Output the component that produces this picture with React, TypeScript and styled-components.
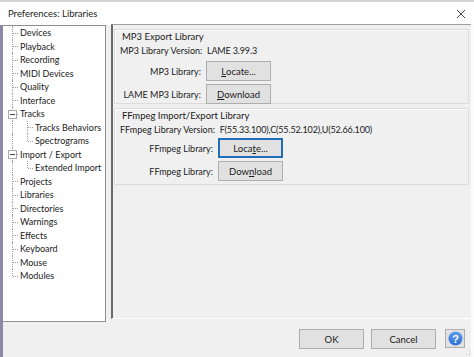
import React from 'react'
import styled, { createGlobalStyle, css } from 'styled-components'

const GlobalStyle = createGlobalStyle`
  html, body {
    margin: 0;
    padding: 0;
    background: #ffffff;
  }
  body {
    font-family: Lato, 'Noto Sans', sans-serif;
    font-size: 9px;
    color: #1b1b1b;
  }
`

const Window = styled.div`
  width: 474px;
  height: 357px;
  box-sizing: border-box;
  display: flex;
  flex-direction: column;
  border-top: 2px solid #d3d3d6;
  overflow: hidden;
`

const TitleBar = styled.div`
  height: 23px;
  display: flex;
  align-items: center;
  justify-content: space-between;
  padding: 0 8px 0 8px;
  background: #ffffff;
  font-size: 9.5px;
  color: #222;
`

const Body = styled.div`
  flex: 1;
  display: flex;
  flex-direction: column;
  background: #f0f0f0;
  border-left: 3px solid #8c88a8;
  border-right: 3px solid #fbfbfb;
`

const Main = styled.div`
  display: flex;
  gap: 5px;
  height: 297px;
`

const Tree = styled.div`
  width: 103px;
  height: 297px;
  box-sizing: border-box;
  background: #ffffff;
  border: 1px solid #8e8f94;
  border-left: 0;
`

const Row = styled.div`
  height: 13.5px;
  display: flex;
  align-items: stretch;
`

const Cell = styled.div<{ $kind: 'vert' | 'tee' | 'end' | 'blank' }>`
  position: relative;
  width: 15px;
  flex: none;

  ${(p) =>
    p.$kind !== 'blank' &&
    css`
      &::before {
        content: '';
        position: absolute;
        left: 9px;
        top: 0;
        height: ${p.$kind === 'end' ? '50%' : '100%'};
        border-left: 1px dotted #a0a0a0;
      }
    `}

  ${(p) =>
    (p.$kind === 'tee' || p.$kind === 'end') &&
    css`
      &::after {
        content: '';
        position: absolute;
        left: 10px;
        right: 0;
        top: 50%;
        border-top: 1px dotted #a0a0a0;
      }
    `}
`

const Expander = styled.span`
  position: absolute;
  left: 5px;
  top: 2.5px;
  width: 7px;
  height: 7px;
  border: 1px solid #a8a8a8;
  background: #fff;
  z-index: 1;

  &::after {
    content: '';
    position: absolute;
    left: 1px;
    right: 1px;
    top: 3px;
    border-top: 1px solid #404040;
  }
`

const Label = styled.span`
  padding-left: 2px;
  line-height: 13.5px;
  white-space: nowrap;
  font-size: 9px;
`

const Panel = styled.div`
  flex: 1;
  margin-top: -1px;
  border-top: 1px solid #a0a0a0;
  border-left: 2px solid #6a6a6a;
  border-bottom: 1px solid #ffffff;
  height: 295px;
  box-sizing: border-box;
  padding: 4px 2px 0 1px;
  display: flex;
  flex-direction: column;
  gap: 4px;
`

const Group = styled.div<{ $height: number }>`
  height: ${(p) => p.$height}px;
  box-sizing: border-box;
  border: 1px solid #dcdcdc;
  box-shadow: inset 1px 1px 0 #ffffff;
  padding: 0 5px;
  display: flex;
  flex-direction: column;
`

const GroupTitle = styled.div`
  line-height: 12px;
  margin-top: 1px;
  padding-left: 2px;
  font-size: 9.5px;
`

const Version = styled.div`
  line-height: 13px;
  margin-top: 1px;
  white-space: nowrap;
`

const VersionValue = styled.span`
  letter-spacing: -0.15px;
`

const Fields = styled.div<{ $labelWidth: number; $top: number }>`
  display: grid;
  grid-template-columns: ${(p) => p.$labelWidth}px 65px;
  column-gap: 5px;
  row-gap: 3px;
  align-items: center;
  margin-top: ${(p) => p.$top}px;
`

const FieldLabel = styled.span`
  text-align: right;
  white-space: nowrap;
`

const Button = styled.button<{ $focused?: boolean; $width?: number }>`
  width: ${(p) => p.$width ?? 65}px;
  height: 20px;
  box-sizing: border-box;
  padding: 0;
  font-family: inherit;
  font-size: 9.5px;
  color: #1b1b1b;
  background: #e1e1e1;
  border: 1px solid #adadad;
  display: flex;
  align-items: center;
  justify-content: center;

  ${(p) =>
    p.$focused &&
    css`
      border: 2px solid #1f6fb8;
    `}

  u {
    text-decoration: underline;
  }
`

const Footer = styled.div`
  flex: 1;
  display: flex;
  align-items: flex-start;
  justify-content: flex-end;
  gap: 7px;
  padding: 7px 6px 0 0;
  position: relative;
`

const HelpButton = styled(Button)`
  margin-left: 2px;
  height: 19px;
`

const Grip = styled.div`
  position: absolute;
  right: 0;
  bottom: 1px;
  width: 6px;
  height: 6px;
  background:
    radial-gradient(circle, #b5b5b5 0.8px, transparent 1px) 0 0 / 3px 3px;
  clip-path: polygon(100% 0, 100% 100%, 0 100%);
`

type Kind = 'vert' | 'tee' | 'end' | 'blank'

const items: { label: string; cells: Kind[]; expander?: boolean }[] = [
  { label: 'Devices', cells: ['tee'] },
  { label: 'Playback', cells: ['tee'] },
  { label: 'Recording', cells: ['tee'] },
  { label: 'MIDI Devices', cells: ['tee'] },
  { label: 'Quality', cells: ['tee'] },
  { label: 'Interface', cells: ['tee'] },
  { label: 'Tracks', cells: ['tee'], expander: true },
  { label: 'Tracks Behaviors', cells: ['vert', 'tee'] },
  { label: 'Spectrograms', cells: ['vert', 'end'] },
  { label: 'Import / Export', cells: ['tee'], expander: true },
  { label: 'Extended Import', cells: ['vert', 'end'] },
  { label: 'Projects', cells: ['tee'] },
  { label: 'Libraries', cells: ['tee'] },
  { label: 'Directories', cells: ['tee'] },
  { label: 'Warnings', cells: ['tee'] },
  { label: 'Effects', cells: ['tee'] },
  { label: 'Keyboard', cells: ['tee'] },
  { label: 'Mouse', cells: ['tee'] },
  { label: 'Modules', cells: ['end'] },
]

const CloseIcon = () => (
  <svg width="10" height="10" viewBox="0 0 10 10">
    <path d="M1 1 L9 9 M9 1 L1 9" stroke="#444" strokeWidth="1" />
  </svg>
)

const HelpIcon = () => (
  <svg width="15" height="15" viewBox="0 0 15 15">
    <defs>
      <linearGradient id="hg" x1="0" y1="0" x2="0" y2="1">
        <stop offset="0" stopColor="#5b9cf0" />
        <stop offset="1" stopColor="#2f6fd6" />
      </linearGradient>
    </defs>
    <circle cx="7.5" cy="7.5" r="7" fill="url(#hg)" />
    <text
      x="7.5"
      y="11.5"
      textAnchor="middle"
      fontSize="11"
      fontWeight="bold"
      fontFamily="'Liberation Sans', sans-serif"
      fill="#ffffff"
    >
      ?
    </text>
  </svg>
)

export default function App() {
  return (
    <>
      <GlobalStyle />
      <Window>
        <TitleBar>
          <span>Preferences: Libraries</span>
          <CloseIcon />
        </TitleBar>
        <Body>
          <Main>
            <Tree>
              {items.map((item) => (
                <Row key={item.label}>
                  {item.cells.map((kind, i) => (
                    <Cell key={i} $kind={kind}>
                      {item.expander && i === 0 && <Expander />}
                    </Cell>
                  ))}
                  <Label>{item.label}</Label>
                </Row>
              ))}
            </Tree>
            <Panel>
              <Group $height={75}>
                <GroupTitle>MP3 Export Library</GroupTitle>
                <Version>
                  MP3 Library Version:&nbsp; <VersionValue>LAME 3.99.3</VersionValue>
                </Version>
                <Fields $labelWidth={81} $top={4}>
                  <FieldLabel>MP3 Library:</FieldLabel>
                  <Button>
                    <u>L</u>ocate...
                  </Button>
                  <FieldLabel>LAME MP3 Library:</FieldLabel>
                  <Button>
                    <u>D</u>ownload
                  </Button>
                </Fields>
              </Group>
              <Group $height={77}>
                <GroupTitle>FFmpeg Import/Export Library</GroupTitle>
                <Version>
                  FFmpeg Library Version:&nbsp;{' '}
                  <VersionValue>F(55.33.100),C(55.52.102),U(52.66.100)</VersionValue>
                </Version>
                <Fields $labelWidth={93} $top={2}>
                  <FieldLabel>FFmpeg Library:</FieldLabel>
                  <Button $focused>
                    Loca<u>t</u>e...
                  </Button>
                  <FieldLabel>FFmpeg Library:</FieldLabel>
                  <Button>
                    Dow<u>n</u>load
                  </Button>
                </Fields>
              </Group>
            </Panel>
          </Main>
          <Footer>
            <Button>OK</Button>
            <Button>Cancel</Button>
            <HelpButton $width={20}>
              <HelpIcon />
            </HelpButton>
            <Grip />
          </Footer>
        </Body>
      </Window>
    </>
  )
}
